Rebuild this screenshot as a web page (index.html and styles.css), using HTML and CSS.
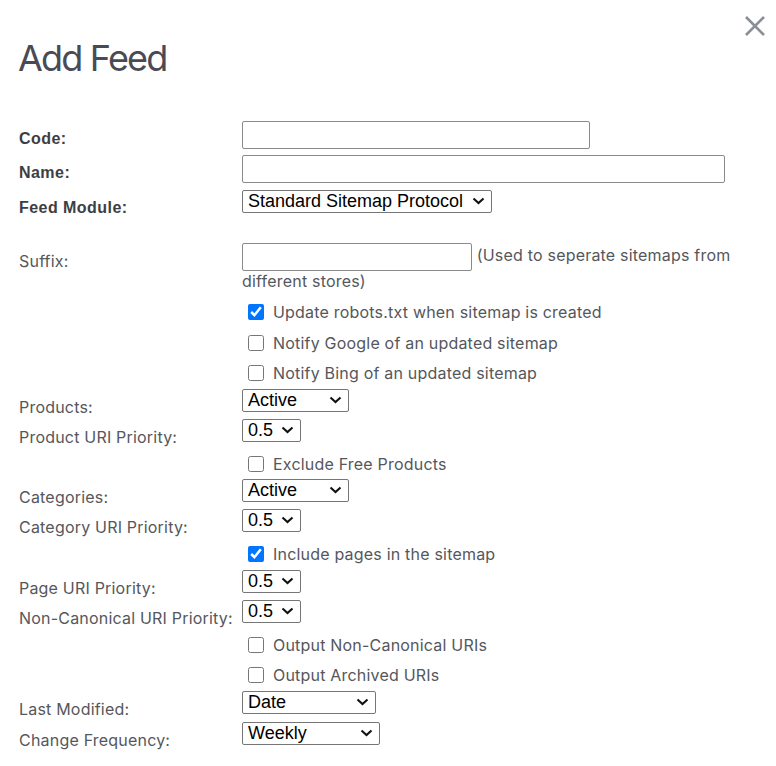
FILE: index.html
```html
<!DOCTYPE html>
<html lang="en">
<head>
<meta charset="utf-8">
<title>Add Feed</title>
<link rel="stylesheet" href="styles.css">
</head>
<body>
<div class="modal">
  <button class="close" type="button" aria-label="Close">
    <svg width="24" height="24" viewBox="0 0 24 24"><path d="M3 3 L21 21 M21 3 L3 21" stroke="#8a8e95" stroke-width="2.6" fill="none"/></svg>
  </button>
  <h1 class="title">Add Feed</h1>
  <form class="form">
    <div class="row row-code">
      <label class="lbl lbl-strong">Code:</label>
      <div class="field"><input type="text" class="txt txt-code"></div>
    </div>
    <div class="row row-name">
      <label class="lbl lbl-strong">Name:</label>
      <div class="field"><input type="text" class="txt txt-name"></div>
    </div>
    <div class="row row-module">
      <label class="lbl lbl-strong">Feed Module:</label>
      <div class="field"><span class="selwrap"><select class="sel sel-module"><option>Standard Sitemap Protocol</option></select><svg class="chev" width="13" height="8" viewBox="0 0 13 8"><path d="M1.5 1.5 L6.5 6 L11.5 1.5" stroke="#111" stroke-width="2.1" fill="none"/></svg></span></div>
    </div>
    <div class="row row-suffix">
      <label class="lbl">Suffix:</label>
      <div class="field field-suffix"><input type="text" class="txt txt-suffix"> (Used to seperate sitemaps from different stores)</div>
    </div>
    <div class="row row-check">
      <div class="lbl"></div>
      <label class="field chk"><input type="checkbox" checked> Update robots.txt when sitemap is created</label>
    </div>
    <div class="row row-check">
      <div class="lbl"></div>
      <label class="field chk"><input type="checkbox"> Notify Google of an updated sitemap</label>
    </div>
    <div class="row row-check">
      <div class="lbl"></div>
      <label class="field chk"><input type="checkbox"> Notify Bing of an updated sitemap</label>
    </div>
    <div class="row row-sel">
      <label class="lbl">Products:</label>
      <div class="field"><span class="selwrap"><select class="sel sel-status"><option>Active</option></select><svg class="chev" width="13" height="8" viewBox="0 0 13 8"><path d="M1.5 1.5 L6.5 6 L11.5 1.5" stroke="#111" stroke-width="2.1" fill="none"/></svg></span></div>
    </div>
    <div class="row row-sel">
      <label class="lbl">Product URI Priority:</label>
      <div class="field"><span class="selwrap"><select class="sel sel-prio"><option>0.5</option></select><svg class="chev" width="13" height="8" viewBox="0 0 13 8"><path d="M1.5 1.5 L6.5 6 L11.5 1.5" stroke="#111" stroke-width="2.1" fill="none"/></svg></span></div>
    </div>
    <div class="row row-check">
      <div class="lbl"></div>
      <label class="field chk"><input type="checkbox"> Exclude Free Products</label>
    </div>
    <div class="row row-sel">
      <label class="lbl">Categories:</label>
      <div class="field"><span class="selwrap"><select class="sel sel-status"><option>Active</option></select><svg class="chev" width="13" height="8" viewBox="0 0 13 8"><path d="M1.5 1.5 L6.5 6 L11.5 1.5" stroke="#111" stroke-width="2.1" fill="none"/></svg></span></div>
    </div>
    <div class="row row-sel">
      <label class="lbl">Category URI Priority:</label>
      <div class="field"><span class="selwrap"><select class="sel sel-prio"><option>0.5</option></select><svg class="chev" width="13" height="8" viewBox="0 0 13 8"><path d="M1.5 1.5 L6.5 6 L11.5 1.5" stroke="#111" stroke-width="2.1" fill="none"/></svg></span></div>
    </div>
    <div class="row row-check">
      <div class="lbl"></div>
      <label class="field chk"><input type="checkbox" checked> Include pages in the sitemap</label>
    </div>
    <div class="row row-sel">
      <label class="lbl">Page URI Priority:</label>
      <div class="field"><span class="selwrap"><select class="sel sel-prio"><option>0.5</option></select><svg class="chev" width="13" height="8" viewBox="0 0 13 8"><path d="M1.5 1.5 L6.5 6 L11.5 1.5" stroke="#111" stroke-width="2.1" fill="none"/></svg></span></div>
    </div>
    <div class="row row-sel">
      <label class="lbl">Non-Canonical URI Priority:</label>
      <div class="field"><span class="selwrap"><select class="sel sel-prio"><option>0.5</option></select><svg class="chev" width="13" height="8" viewBox="0 0 13 8"><path d="M1.5 1.5 L6.5 6 L11.5 1.5" stroke="#111" stroke-width="2.1" fill="none"/></svg></span></div>
    </div>
    <div class="row row-check">
      <div class="lbl"></div>
      <label class="field chk"><input type="checkbox"> Output Non-Canonical URIs</label>
    </div>
    <div class="row row-check">
      <div class="lbl"></div>
      <label class="field chk"><input type="checkbox"> Output Archived URIs</label>
    </div>
    <div class="row row-sel row-last">
      <label class="lbl">Last Modified:</label>
      <div class="field"><span class="selwrap"><select class="sel sel-date"><option>Date</option></select><svg class="chev" width="13" height="8" viewBox="0 0 13 8"><path d="M1.5 1.5 L6.5 6 L11.5 1.5" stroke="#111" stroke-width="2.1" fill="none"/></svg></span></div>
    </div>
    <div class="row row-sel">
      <label class="lbl">Change Frequency:</label>
      <div class="field"><span class="selwrap"><select class="sel sel-freq"><option>Weekly</option></select><svg class="chev" width="13" height="8" viewBox="0 0 13 8"><path d="M1.5 1.5 L6.5 6 L11.5 1.5" stroke="#111" stroke-width="2.1" fill="none"/></svg></span></div>
    </div>
  </form>
</div>
</body>
</html>
```
FILE: styles.css
```css
* { box-sizing: border-box; }
html, body { margin: 0; padding: 0; background: #fff; }
body {
  font-family: Inter, "Liberation Sans", sans-serif;
  color: #55575c;
}
.modal {
  position: relative;
  padding: 0 0 0 18px;
}
.close {
  position: absolute;
  top: 14px;
  right: 9px;
  border: 0;
  background: none;
  padding: 0;
  width: 24px;
  height: 24px;
  cursor: pointer;
}
.close svg { display: block; }
.title {
  margin: 0;
  padding-top: 36px;
  font-family: Inter, "Liberation Sans", sans-serif;
  font-weight: 400;
  font-size: 36px;
  line-height: 44px;
  letter-spacing: -1.8px;
  color: #4a4a55;
}
.form {
  margin-top: 41px;
  padding-left: 1px;
}
.row {
  display: flex;
  align-items: flex-start;
}
.lbl {
  flex: none;
  width: 223px;
  padding-top: 8px;
  font-size: 16px;
  line-height: 20px;
  letter-spacing: 0.2px;
  color: #55575c;
  white-space: nowrap;
}
.lbl-strong {
  font-family: "Liberation Sans", Arial, sans-serif;
  font-weight: 700;
  font-size: 16px;
  letter-spacing: 0.45px;
  color: #3d3e42;
}
.field {
  flex: 1;
  min-width: 0;
}
.row-code { height: 34px; }
.row-name { height: 35px; }
.row-module { height: 53px; }
.row-suffix { height: 54px; }
.row-sel { height: 30px; }
.row-last { height: 31px; }
.row-check { height: 30.5px; }
.txt {
  height: 28px;
  border: 1px solid #8a8a8a;
  border-radius: 2px;
  padding: 2px 4px;
  font: 15px "Liberation Sans", Arial, sans-serif;
  background: #fff;
  margin: 0;
}
.txt-code { width: 348px; }
.txt-name { width: 483px; }
.txt-suffix { width: 230px; vertical-align: middle; }
.field-suffix {
  font-size: 16px;
  line-height: 20px;
  letter-spacing: 0.2px;
  color: #55575c;
  padding-right: 28px;
}
.selwrap {
  position: relative;
  display: inline-block;
  vertical-align: top;
}
.sel {
  display: block;
  -webkit-appearance: none;
  appearance: none;
  height: 23px;
  margin: 0;
  border: 1px solid #767676;
  border-radius: 2px;
  background: #fff;
  color: #000;
  font: 18px/21px "Liberation Sans", Arial, sans-serif;
  padding: 0 0 0 5px;
}
.chev {
  position: absolute;
  right: 7px;
  top: 7px;
  pointer-events: none;
}
.sel-module { width: 250px; }
.sel-status { width: 107px; }
.sel-prio { width: 59px; }
.sel-date { width: 134px; }
.sel-freq { width: 138px; }
.chk {
  display: flex;
  align-items: center;
  height: 30.5px;
  font-size: 16px;
  letter-spacing: 0.2px;
  color: #55575c;
  white-space: nowrap;
}
.chk input {
  width: 16px;
  height: 16px;
  margin: 0 9px 0 6px;
  accent-color: #0075ff;
}
```
